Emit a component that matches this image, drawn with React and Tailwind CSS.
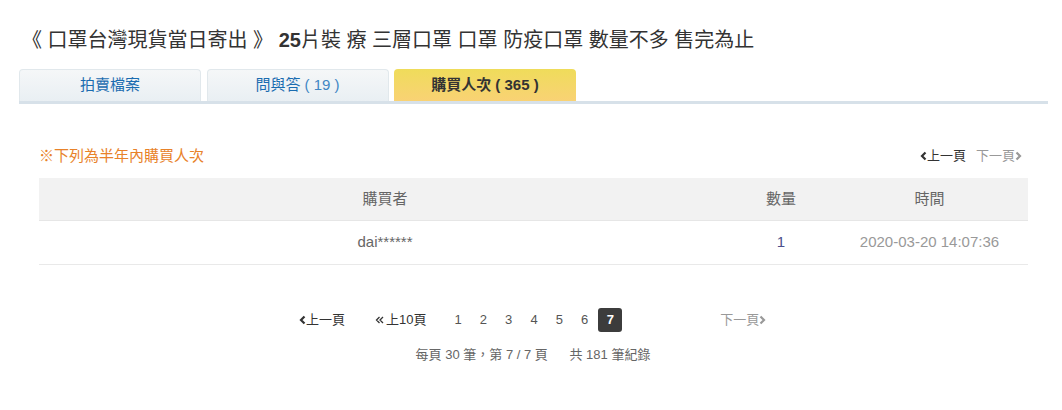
import React from 'react';

const font = { fontFamily: '"Liberation Sans", "Noto Sans CJK TC", sans-serif' };

function Chev({ dir = 'left', className = '' }) {
  return (
    <svg width="7" height="10" viewBox="0 0 7 10" className={className}>
      {dir === 'left' ? (
        <path d="M5.5 1.5 L2 5 L5.5 8.5" fill="none" stroke="currentColor" strokeWidth="2.2" />
      ) : (
        <path d="M1.5 1.5 L5 5 L1.5 8.5" fill="none" stroke="currentColor" strokeWidth="2.2" />
      )}
    </svg>
  );
}

function DoubleChev() {
  return (
    <svg width="9" height="10" viewBox="0 0 9 10" className="text-[#333]">
      <path d="M4.5 2 L1.5 5 L4.5 8 M8 2 L5 5 L8 8" fill="none" stroke="currentColor" strokeWidth="1.3" />
    </svg>
  );
}

export default function App() {
  const tabs = [
    { label: '拍賣檔案' },
    { label: '問與答', count: '19' },
    { label: '購買人次', count: '365', active: true },
  ];

  return (
    <div className="w-[1062px] h-[410px] bg-white text-[#333]" style={font}>
      <h1 className="pt-[27px] pl-[22px] text-[20px] leading-[26px] text-[#333] whitespace-nowrap">
        《 口罩台灣現貨當日寄出 》 <span className="font-bold">25</span>片裝 療 三層口罩 口罩 防疫口罩 數量不多 售完為止
      </h1>

      <div className="mt-[16px] mx-[19px] mr-[14px] flex gap-[5.5px] border-b-[3px] border-[#d7e1e9]">
        {tabs.map((t) => (
          <div
            key={t.label}
            className={`w-[182px] h-[32px] rounded-t-[4px] flex items-center justify-center text-[15px] ${
              t.active
                ? 'bg-gradient-to-b from-[#efdc5a] to-[#f9d274] text-[#333] font-bold'
                : 'bg-gradient-to-b from-[#f5f7f8] to-[#e9eff3] border border-b-0 border-[#e1e8ec] text-[#1a6cb0]'
            }`}
          >
            {t.label}
            {t.count && (
              <span className={`ml-[4px] ${t.active ? '' : 'text-[#3f86c4]'}`}>( {t.count} )</span>
            )}
          </div>
        ))}
      </div>

      <div className="mx-[39px] w-[989px]">
        <div className="mt-[43px] flex items-center justify-between text-[13px] leading-[18px]">
          <span className="text-[#e8822a] text-[15px]">※下列為半年內購買人次</span>
          <div className="flex items-center gap-[10px] mr-[6px]">
            <span className="flex items-center text-[#333]">
              <Chev dir="left" />上一頁
            </span>
            <span className="flex items-center text-[#999]">
              下一頁<Chev dir="right" />
            </span>
          </div>
        </div>

        <div className="mt-[13px] text-[15px]">
          <div className="flex h-[43px] items-center bg-[#f2f2f2] border-b border-[#e6e6e6] text-[#666]">
            <div className="w-[692px] text-center">購買者</div>
            <div className="w-[100px] text-center">數量</div>
            <div className="flex-1 text-center">時間</div>
          </div>
          <div className="flex h-[44px] items-center border-b border-[#e9e9e9]">
            <div className="w-[692px] text-center text-[#666]">dai******</div>
            <div className="w-[100px] text-center text-[#4c4f8c]">1</div>
            <div className="flex-1 text-center text-[#999]">2020-03-20 14:07:36</div>
          </div>
        </div>
      </div>

      <div className="mt-[43px] flex items-center text-[13px] text-[#333] pl-[299px]">
        <span className="flex items-center">
          <Chev dir="left" />上一頁
        </span>
        <span className="flex items-center ml-[30px]">
          <DoubleChev />
          <span className="ml-[2px]">上10頁</span>
        </span>
        <div className="flex items-center ml-[19px]">
          {['1', '2', '3', '4', '5', '6'].map((n) => (
            <span key={n} className="w-[25.3px] text-center text-[#555]">{n}</span>
          ))}
          <span className="ml-[1px] w-[24px] h-[24px] rounded-[3px] bg-[#3c3c3c] text-white font-bold flex items-center justify-center">
            7
          </span>
        </div>
        <span className="flex items-center ml-[98px] text-[#999]">
          下一頁<Chev dir="right" />
        </span>
      </div>

      <div className="mt-[13px] text-center text-[13px] text-[#666] pl-[4px] whitespace-pre">
        每頁 30 筆，第 7 / 7 頁      共 181 筆紀錄
      </div>
    </div>
  );
}
